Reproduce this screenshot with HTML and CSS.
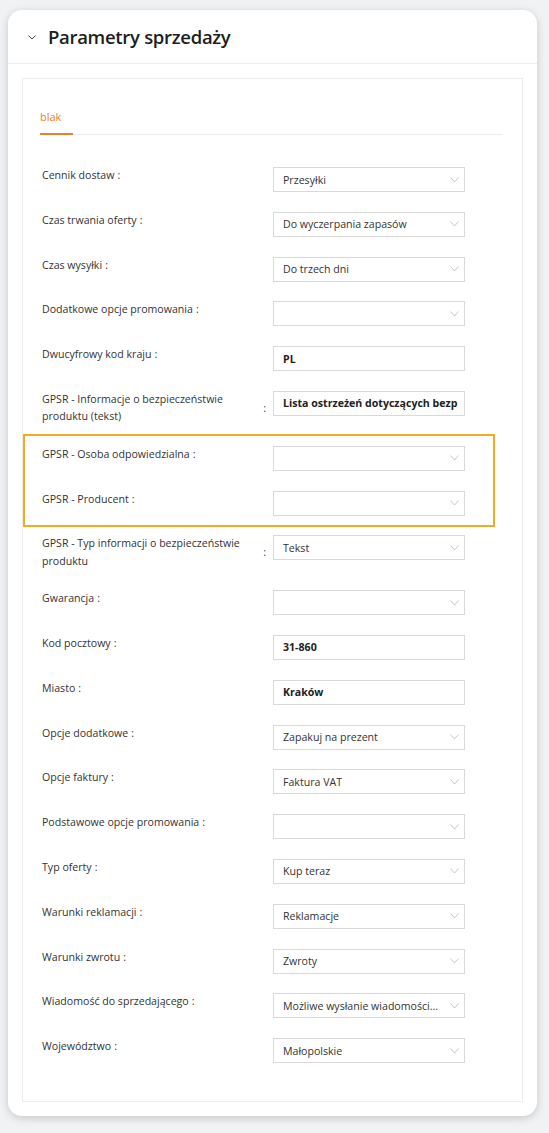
FILE: index.html
```html
<!DOCTYPE html>
<html lang="pl">
<head>
    <meta charset="UTF-8">
    <meta name="viewport" content="width=device-width, initial-scale=1.0">
    <title>Parametry sprzedaży</title>
    <link rel="stylesheet" href="styles.css">
</head>
<body>
    <div class="panel">
        <div class="panel-header">
            <svg class="collapse-icon" width="8" height="5" viewBox="0 0 8 5"><path d="M0.5 0.5L4 4L7.5 0.5" fill="none" stroke="#444" stroke-width="1"/></svg>
            <h2 class="panel-title">Parametry sprzedaży</h2>
        </div>

        <div class="panel-body">
            <div class="section">
                <div class="tabs">
                    <div class="tab active">blak</div>
                </div>

                <form class="form">
                    <div class="form-row">
                        <label class="form-label"><span>Cennik dostaw</span><i class="colon">:</i></label>
                        <div class="select"><span class="value">Przesyłki</span><svg class="arrow" width="9" height="6" viewBox="0 0 9 6"><path d="M0.5 0.5L4.5 5L8.5 0.5"/></svg></div>
                    </div>
                    <div class="form-row">
                        <label class="form-label"><span>Czas trwania oferty</span><i class="colon">:</i></label>
                        <div class="select"><span class="value">Do wyczerpania zapasów</span><svg class="arrow" width="9" height="6" viewBox="0 0 9 6"><path d="M0.5 0.5L4.5 5L8.5 0.5"/></svg></div>
                    </div>
                    <div class="form-row">
                        <label class="form-label"><span>Czas wysyłki</span><i class="colon">:</i></label>
                        <div class="select"><span class="value">Do trzech dni</span><svg class="arrow" width="9" height="6" viewBox="0 0 9 6"><path d="M0.5 0.5L4.5 5L8.5 0.5"/></svg></div>
                    </div>
                    <div class="form-row">
                        <label class="form-label"><span>Dodatkowe opcje promowania</span><i class="colon">:</i></label>
                        <div class="select"><span class="value"></span><svg class="arrow" width="9" height="6" viewBox="0 0 9 6"><path d="M0.5 0.5L4.5 5L8.5 0.5"/></svg></div>
                    </div>
                    <div class="form-row">
                        <label class="form-label"><span>Dwucyfrowy kod kraju</span><i class="colon">:</i></label>
                        <div class="input">PL</div>
                    </div>
                    <div class="form-row">
                        <label class="form-label"><span>GPSR - Informacje o bezpieczeństwie produktu (tekst)</span><i class="colon">:</i></label>
                        <div class="input">Lista ostrzeżeń dotyczących bezp</div>
                    </div>

                    <div class="form-group marked">
                        <div class="form-row">
                            <label class="form-label"><span>GPSR - Osoba odpowiedzialna</span><i class="colon">:</i></label>
                            <div class="select"><span class="value"></span><svg class="arrow" width="9" height="6" viewBox="0 0 9 6"><path d="M0.5 0.5L4.5 5L8.5 0.5"/></svg></div>
                        </div>
                        <div class="form-row">
                            <label class="form-label"><span>GPSR - Producent</span><i class="colon">:</i></label>
                            <div class="select"><span class="value"></span><svg class="arrow" width="9" height="6" viewBox="0 0 9 6"><path d="M0.5 0.5L4.5 5L8.5 0.5"/></svg></div>
                        </div>
                    </div>

                    <div class="form-row">
                        <label class="form-label"><span>GPSR - Typ informacji o bezpieczeństwie produktu</span><i class="colon">:</i></label>
                        <div class="select"><span class="value">Tekst</span><svg class="arrow" width="9" height="6" viewBox="0 0 9 6"><path d="M0.5 0.5L4.5 5L8.5 0.5"/></svg></div>
                    </div>
                    <div class="form-row">
                        <label class="form-label"><span>Gwarancja</span><i class="colon">:</i></label>
                        <div class="select"><span class="value"></span><svg class="arrow" width="9" height="6" viewBox="0 0 9 6"><path d="M0.5 0.5L4.5 5L8.5 0.5"/></svg></div>
                    </div>
                    <div class="form-row">
                        <label class="form-label"><span>Kod pocztowy</span><i class="colon">:</i></label>
                        <div class="input">31-860</div>
                    </div>
                    <div class="form-row">
                        <label class="form-label"><span>Miasto</span><i class="colon">:</i></label>
                        <div class="input">Kraków</div>
                    </div>
                    <div class="form-row">
                        <label class="form-label"><span>Opcje dodatkowe</span><i class="colon">:</i></label>
                        <div class="select"><span class="value">Zapakuj na prezent</span><svg class="arrow" width="9" height="6" viewBox="0 0 9 6"><path d="M0.5 0.5L4.5 5L8.5 0.5"/></svg></div>
                    </div>
                    <div class="form-row">
                        <label class="form-label"><span>Opcje faktury</span><i class="colon">:</i></label>
                        <div class="select"><span class="value">Faktura VAT</span><svg class="arrow" width="9" height="6" viewBox="0 0 9 6"><path d="M0.5 0.5L4.5 5L8.5 0.5"/></svg></div>
                    </div>
                    <div class="form-row">
                        <label class="form-label"><span>Podstawowe opcje promowania</span><i class="colon">:</i></label>
                        <div class="select"><span class="value"></span><svg class="arrow" width="9" height="6" viewBox="0 0 9 6"><path d="M0.5 0.5L4.5 5L8.5 0.5"/></svg></div>
                    </div>
                    <div class="form-row">
                        <label class="form-label"><span>Typ oferty</span><i class="colon">:</i></label>
                        <div class="select"><span class="value">Kup teraz</span><svg class="arrow" width="9" height="6" viewBox="0 0 9 6"><path d="M0.5 0.5L4.5 5L8.5 0.5"/></svg></div>
                    </div>
                    <div class="form-row">
                        <label class="form-label"><span>Warunki reklamacji</span><i class="colon">:</i></label>
                        <div class="select"><span class="value">Reklamacje</span><svg class="arrow" width="9" height="6" viewBox="0 0 9 6"><path d="M0.5 0.5L4.5 5L8.5 0.5"/></svg></div>
                    </div>
                    <div class="form-row">
                        <label class="form-label"><span>Warunki zwrotu</span><i class="colon">:</i></label>
                        <div class="select"><span class="value">Zwroty</span><svg class="arrow" width="9" height="6" viewBox="0 0 9 6"><path d="M0.5 0.5L4.5 5L8.5 0.5"/></svg></div>
                    </div>
                    <div class="form-row">
                        <label class="form-label"><span>Wiadomość do sprzedającego</span><i class="colon">:</i></label>
                        <div class="select"><span class="value">Możliwe wysłanie wiadomości...</span><svg class="arrow" width="9" height="6" viewBox="0 0 9 6"><path d="M0.5 0.5L4.5 5L8.5 0.5"/></svg></div>
                    </div>
                    <div class="form-row">
                        <label class="form-label"><span>Województwo</span><i class="colon">:</i></label>
                        <div class="select"><span class="value">Małopolskie</span><svg class="arrow" width="9" height="6" viewBox="0 0 9 6"><path d="M0.5 0.5L4.5 5L8.5 0.5"/></svg></div>
                    </div>
                </form>
            </div>
        </div>
    </div>
</body>
</html>
```

FILE: styles.css
```css
* {
    margin: 0;
    padding: 0;
    box-sizing: border-box;
    font-family: 'Open Sans', 'Noto Sans', sans-serif;
}

:root {
    --accent: #e9822c;
    --marker: #f5aa22;
    --border: #ececec;
    --field-border: #d9d9d9;
    --text: #333333;
    --muted: #bdbdbd;
}

body {
    background: #f1f2f4;
    padding: 10px 12px 16px 8px;
    color: var(--text);
}

/* Karta panelu */
.panel {
    background: #ffffff;
    border-radius: 14px;
    box-shadow: 0 2px 9px rgba(0, 0, 0, 0.18);
}

.panel-header {
    height: 54px;
    display: flex;
    align-items: center;
    padding-left: 20px;
    border-bottom: 1px solid var(--border);
}

.collapse-icon {
    margin-right: 12px;
    margin-top: 2px;
}

.panel-title {
    font-size: 18.5px;
    font-weight: 600;
    color: #1d1d1d;
    letter-spacing: -0.3px;
}

.panel-body {
    padding: 14px;
}

.section {
    border: 1px solid var(--border);
    padding: 22px 19px 38px 17px;
}

/* Zakładki */
.tabs {
    display: flex;
    border-bottom: 1px solid var(--border);
}

.tab {
    width: 33px;
    padding: 8px 0;
    font-size: 11px;
    line-height: 16px;
    margin-bottom: -1px;
    border-bottom: 2px solid transparent;
}

.tab.active {
    color: var(--accent);
    border-bottom-color: var(--accent);
}

/* Formularz */
.form {
    margin-top: 32px;
    padding-left: 2px;
}

.form-row {
    display: flex;
    align-items: flex-start;
    margin-bottom: 19.8px;
}

.form > .form-row:last-child {
    margin-bottom: 0;
}

.form-label {
    width: 231px;
    flex-shrink: 0;
    display: flex;
    align-items: center;
    font-size: 10.6px;
    line-height: 17.5px;
    color: var(--text);
}

.colon {
    font-style: normal;
    margin: 0 7px 0 3px;
}

.select,
.input {
    width: 192px;
    height: 25px;
    border: 1px solid var(--field-border);
    background: #ffffff;
    display: flex;
    align-items: center;
    padding: 0 5px 0 9px;
    font-size: 10.6px;
    white-space: nowrap;
    overflow: hidden;
}

.select .value {
    flex: 1;
    overflow: hidden;
    margin-right: 4px;
}

.arrow {
    flex-shrink: 0;
}

.arrow path {
    fill: none;
    stroke: var(--muted);
    stroke-width: 0.9;
}

.input {
    font-weight: 700;
    padding-right: 0;
    color: #222222;
}

/* Oznaczona grupa pól */
.form-group {
    position: relative;
}

.form-group.marked::before {
    content: '';
    position: absolute;
    top: -12px;
    bottom: -11px;
    left: -19px;
    right: 8px;
    border: 2px solid var(--marker);
    pointer-events: none;
}
```
